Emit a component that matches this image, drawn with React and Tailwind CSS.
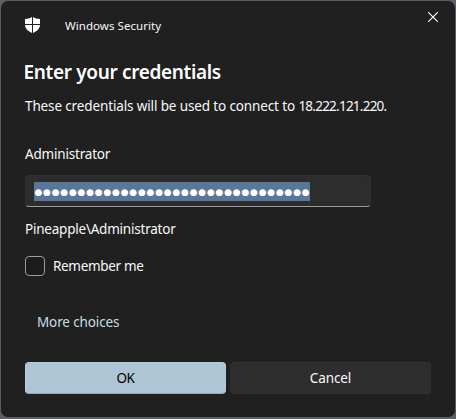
import React from "react";

const PASSWORD_LENGTH = 32;

function ShieldIcon() {
  return (
    <svg width="15" height="16" viewBox="0 0 15 16" fill="#fff" className="block">
      <path d="M0 2C3 2 5 1.2 7 0V7H0Z" />
      <path d="M8 0C10 1.2 12 2 15 2V7H8Z" />
      <path d="M0 8H7V15.9C3.2 14.4 .4 12 0 8Z" />
      <path d="M8 8H15C14.6 12 11.8 14.4 8 15.9Z" />
    </svg>
  );
}

function CloseIcon() {
  return (
    <svg width="10" height="10" viewBox="0 0 10 10" stroke="#fff" strokeWidth="1.1" className="block">
      <path d="M.2.2 9.8 9.8M9.8.2.2 9.8" />
    </svg>
  );
}

export default function App() {
  return (
    <div className="h-[419px] w-[456px] overflow-hidden bg-[#5f6063]">
      <div className="flex h-[419px] w-[456px] flex-col rounded-lg border border-b-2 border-[#5c5d60] bg-[#202020] px-6 font-['Noto_Sans','Open_Sans',sans-serif] text-[13.5px] leading-5 text-[#f8f8f8]">
        <header className="flex h-[50px] shrink-0 items-start">
          <div className="mt-4">
            <ShieldIcon />
          </div>
          <span className="mt-[15px] ml-[25px] text-[11.5px] tracking-[0.06px] whitespace-nowrap">Windows Security</span>
          <button aria-label="Close" className="mt-[11px] mr-[-7px] ml-auto">
            <CloseIcon />
          </button>
        </header>

        <h1 className="-ml-[1.5px] h-7 shrink-0 pt-[7px] text-[19px] leading-7 font-semibold tracking-[-0.34px] whitespace-nowrap text-white">
          Enter your credentials
        </h1>
        <p className="mt-[17px] shrink-0 tracking-[-0.13px] whitespace-nowrap">
          These credentials will be used to connect to <span className="tracking-[-0.76px]">18.222.121.220.</span>
        </p>

        <label className="mt-7 shrink-0 tracking-[-0.19px]">Administrator</label>
        <div className="mt-[11px] flex h-8 w-[346px] shrink-0 items-start rounded-[4px] border border-[#303030] border-b-[#9a9a9a] bg-[#2d2d2d] pt-[6px] pl-2">
          <div className="flex h-[19px] w-[276px] items-center bg-[#5b769b] pt-px font-['DejaVu_Sans',sans-serif] text-[9px] leading-4 text-white">
            {Array.from({ length: PASSWORD_LENGTH }, (_, i) => (
              <span key={i} className="w-[8.625px] text-center">●</span>
            ))}
          </div>
        </div>
        <p className="mt-3 shrink-0 tracking-[-0.22px]">Pineapple\Administrator</p>

        <label className="mt-[17px] flex h-5 shrink-0 items-center gap-2">
          <span className="h-5 w-5 rounded-[4px] border border-[#9c9c9c] bg-[#1c1c1c]" />
          <span className="tracking-[-0.32px]">Remember me</span>
        </label>

        <a className="mt-9 ml-3 shrink-0 tracking-[-0.13px] text-[#c5dfea]">More choices</a>

        <div className="mt-[30px] flex gap-1">
          <button className="h-8 w-[201px] rounded-[4px] border border-[#b7cad9] border-b-[#93a8b7] bg-[#aec5d6] tracking-[-0.4px] text-black">
            OK
          </button>
          <button className="h-8 w-[201px] rounded-[4px] border border-[#303030] border-t-[#353535] bg-[#2d2d2d] tracking-[-0.1px]">
            Cancel
          </button>
        </div>
      </div>
    </div>
  );
}
